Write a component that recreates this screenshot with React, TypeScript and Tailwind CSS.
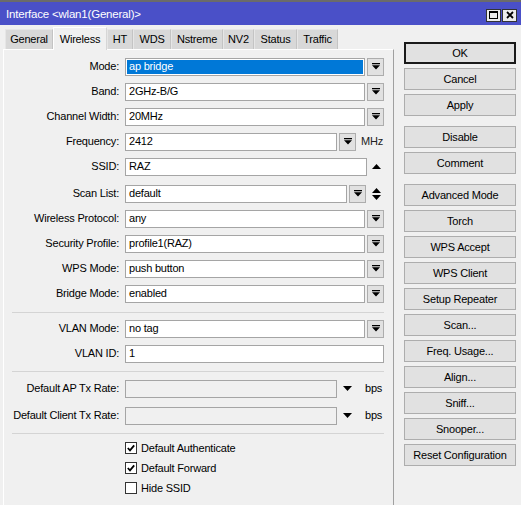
import type { ReactNode } from "react";

const tabs = [
  { name: "General", w: "w-[48px]" },
  { name: "Wireless", w: "w-[54px]", active: true },
  { name: "HT", w: "w-[26px]" },
  { name: "WDS", w: "w-[38px]" },
  { name: "Nstreme", w: "w-[52px]" },
  { name: "NV2", w: "w-[31px]" },
  { name: "Status", w: "w-[43px]" },
  { name: "Traffic", w: "w-[41px]" },
];

function DropIcon() {
  return (
    <svg width="8" height="7" viewBox="0 0 8 7">
      <path d="M0 0h8v1.2H0z M0 2.2h8L4 6.6z" fill="#000" />
    </svg>
  );
}

function DropBtn() {
  return (
    <div className="w-[17px] h-[18px] ml-[2px] bg-[#e1e1e1] border border-[#adadad] flex items-center justify-center">
      <DropIcon />
    </div>
  );
}

function UpTri() {
  return (
    <svg width="9" height="5" viewBox="0 0 9 5">
      <path d="M0 5L4.5 0L9 5z" fill="#000" />
    </svg>
  );
}

function DownTri() {
  return (
    <svg width="9" height="5" viewBox="0 0 9 5">
      <path d="M0 0h9L4.5 5z" fill="#000" />
    </svg>
  );
}

function Input({
  value,
  w,
  selected,
  disabled,
}: {
  value?: string;
  w: string;
  selected?: boolean;
  disabled?: boolean;
}) {
  if (selected) {
    return (
      <div className={`${w} h-[18px] border border-[#a5a5a5] bg-white p-px`}>
        <div className="w-full h-full bg-[#0078d7] text-white flex items-center pl-[2px]">
          {value}
        </div>
      </div>
    );
  }
  return (
    <div
      className={`${w} h-[18px] border border-[#a5a5a5] flex items-center px-[3px] ${
        disabled ? "bg-[#f0f0f0]" : "bg-white"
      }`}
    >
      {value}
    </div>
  );
}

function Row({
  label,
  children,
  className = "",
}: {
  label: string;
  children: ReactNode;
  className?: string;
}) {
  return (
    <div className={`flex items-center h-[25px] ${className}`}>
      <div className="w-[115px] text-right whitespace-nowrap">{label}</div>
      <div className="ml-[6px] flex items-center">{children}</div>
    </div>
  );
}

function Sep({ className = "" }: { className?: string }) {
  return <div className={`ml-[8px] w-[372px] h-px bg-[#d4d4d4] ${className}`} />;
}

function Check({ label, checked }: { label: string; checked?: boolean }) {
  return (
    <div className="flex items-center h-[20px] pl-[121px]">
      <div className="w-[12px] h-[12px] border border-[#333] bg-white flex items-center justify-center">
        {checked && (
          <svg width="8" height="8" viewBox="0 0 8 8">
            <path d="M0.8 4L3 6.3L7.2 1.4" stroke="#000" strokeWidth="1.8" fill="none" />
          </svg>
        )}
      </div>
      <span className="ml-[4px]">{label}</span>
    </div>
  );
}

function Btn({
  children,
  primary,
  className = "",
}: {
  children: ReactNode;
  primary?: boolean;
  className?: string;
}) {
  return (
    <div
      className={`w-[112px] h-[22px] flex items-center justify-center bg-[#e1e1e1] ${
        primary ? "border-2 border-[#1a1a1a]" : "border border-[#adadad]"
      } ${className}`}
    >
      {children}
    </div>
  );
}

export default function App() {
  return (
    <div className="w-[521px] h-[505px] overflow-hidden bg-[#f0f0f0] border-t-2 border-[#6b6b6b] font-['Liberation_Sans',Arial,sans-serif] text-[11px] tracking-[-0.2px] text-black flex flex-col">
      {/* Title bar */}
      <div className="h-[23px] bg-[#4a50c8] flex items-center justify-between pt-[3px] pl-[6px] pr-[4px] shrink-0">
        <span className="text-white text-[11.5px]">Interface &lt;wlan1(General)&gt;</span>
        <div className="flex gap-[1px]">
          <div className="w-[15px] h-[13px] bg-[#ececec] border border-[#333] flex items-center justify-center">
            <div className="w-[9px] h-[8px] border border-black border-t-2" />
          </div>
          <div className="w-[15px] h-[13px] bg-[#ececec] border border-[#333] flex items-center justify-center">
            <svg width="8" height="8" viewBox="0 0 8 8">
              <path d="M1 1L7 7M7 1L1 7" stroke="#000" strokeWidth="1.8" />
            </svg>
          </div>
        </div>
      </div>

      <div className="flex flex-1">
        {/* Left: tabs + form */}
        <div className="ml-[3px] w-[391px] flex flex-col">
          <div className="relative z-10 flex items-end h-[24px] pl-[2px]">
            {tabs.map((t) =>
              t.active ? (
                <div
                  key={t.name}
                  className={`${t.w} h-[23px] mb-[-1px] bg-[#f0f0f0] border border-b-0 border-[#d6d6d6] border-t-white border-l-white flex items-start justify-center pt-[3px]`}
                >
                  {t.name}
                </div>
              ) : (
                <div
                  key={t.name}
                  className={`${t.w} h-[20px] bg-[#d8d8d8] border border-b-0 border-[#e6e6e6] border-r-[#c4c4c4] flex items-center justify-center`}
                >
                  {t.name}
                </div>
              ),
            )}
          </div>

          <div className="flex-1 border-t border-l border-white border-r border-r-[#a0a0a0] pt-[4px]">
            <Row label="Mode:">
              <Input value="ap bridge" w="w-[240px]" selected />
              <DropBtn />
            </Row>
            <Row label="Band:">
              <Input value="2GHz-B/G" w="w-[240px]" />
              <DropBtn />
            </Row>
            <Row label="Channel Width:">
              <Input value="20MHz" w="w-[240px]" />
              <DropBtn />
            </Row>
            <Row label="Frequency:">
              <Input value="2412" w="w-[212px]" />
              <DropBtn />
              <span className="ml-[5px] text-[#222]">MHz</span>
            </Row>
            <Row label="SSID:">
              <Input value="RAZ" w="w-[242px]" />
              <div className="ml-[5px] flex items-center">
                <UpTri />
              </div>
            </Row>
            <Row label="Scan List:" className="mt-[2px]">
              <Input value="default" w="w-[222px]" />
              <DropBtn />
              <div className="ml-[6px] flex flex-col gap-[2px]">
                <UpTri />
                <DownTri />
              </div>
            </Row>
            <Row label="Wireless Protocol:">
              <Input value="any" w="w-[240px]" />
              <DropBtn />
            </Row>
            <Row label="Security Profile:">
              <Input value="profile1(RAZ)" w="w-[240px]" />
              <DropBtn />
            </Row>
            <Row label="WPS Mode:">
              <Input value="push button" w="w-[240px]" />
              <DropBtn />
            </Row>
            <Row label="Bridge Mode:">
              <Input value="enabled" w="w-[240px]" />
              <DropBtn />
            </Row>

            <Sep className="mt-[6px]" />

            <Row label="VLAN Mode:" className="mt-[3px]">
              <Input value="no tag" w="w-[240px]" />
              <DropBtn />
            </Row>
            <Row label="VLAN ID:">
              <Input value="1" w="w-[259px]" />
            </Row>

            <Sep className="mt-[5px]" />

            <Row label="Default AP Tx Rate:" className="mt-[4px]">
              <Input w="w-[212px]" disabled />
              <div className="ml-[6px] flex items-center">
                <DownTri />
              </div>
              <span className="ml-[13px]">bps</span>
            </Row>
            <Row label="Default Client Tx Rate:" className="mt-[2px]">
              <Input w="w-[212px]" disabled />
              <div className="ml-[6px] flex items-center">
                <DownTri />
              </div>
              <span className="ml-[13px]">bps</span>
            </Row>

            <Sep className="mt-[5px]" />

            <div className="mt-[4px]">
              <Check label="Default Authenticate" checked />
              <Check label="Default Forward" checked />
              <Check label="Hide SSID" />
            </div>
          </div>
        </div>

        {/* Right: buttons */}
        <div className="ml-[10px] pt-[17px] flex flex-col gap-[4px]">
          <Btn primary>OK</Btn>
          <Btn>Cancel</Btn>
          <Btn>Apply</Btn>
          <Btn className="mt-[6px]">Disable</Btn>
          <Btn>Comment</Btn>
          <Btn className="mt-[6px]">Advanced Mode</Btn>
          <Btn>Torch</Btn>
          <Btn>WPS Accept</Btn>
          <Btn>WPS Client</Btn>
          <Btn>Setup Repeater</Btn>
          <Btn>Scan...</Btn>
          <Btn>Freq. Usage...</Btn>
          <Btn>Align...</Btn>
          <Btn>Sniff...</Btn>
          <Btn>Snooper...</Btn>
          <Btn>Reset Configuration</Btn>
        </div>
      </div>
    </div>
  );
}
